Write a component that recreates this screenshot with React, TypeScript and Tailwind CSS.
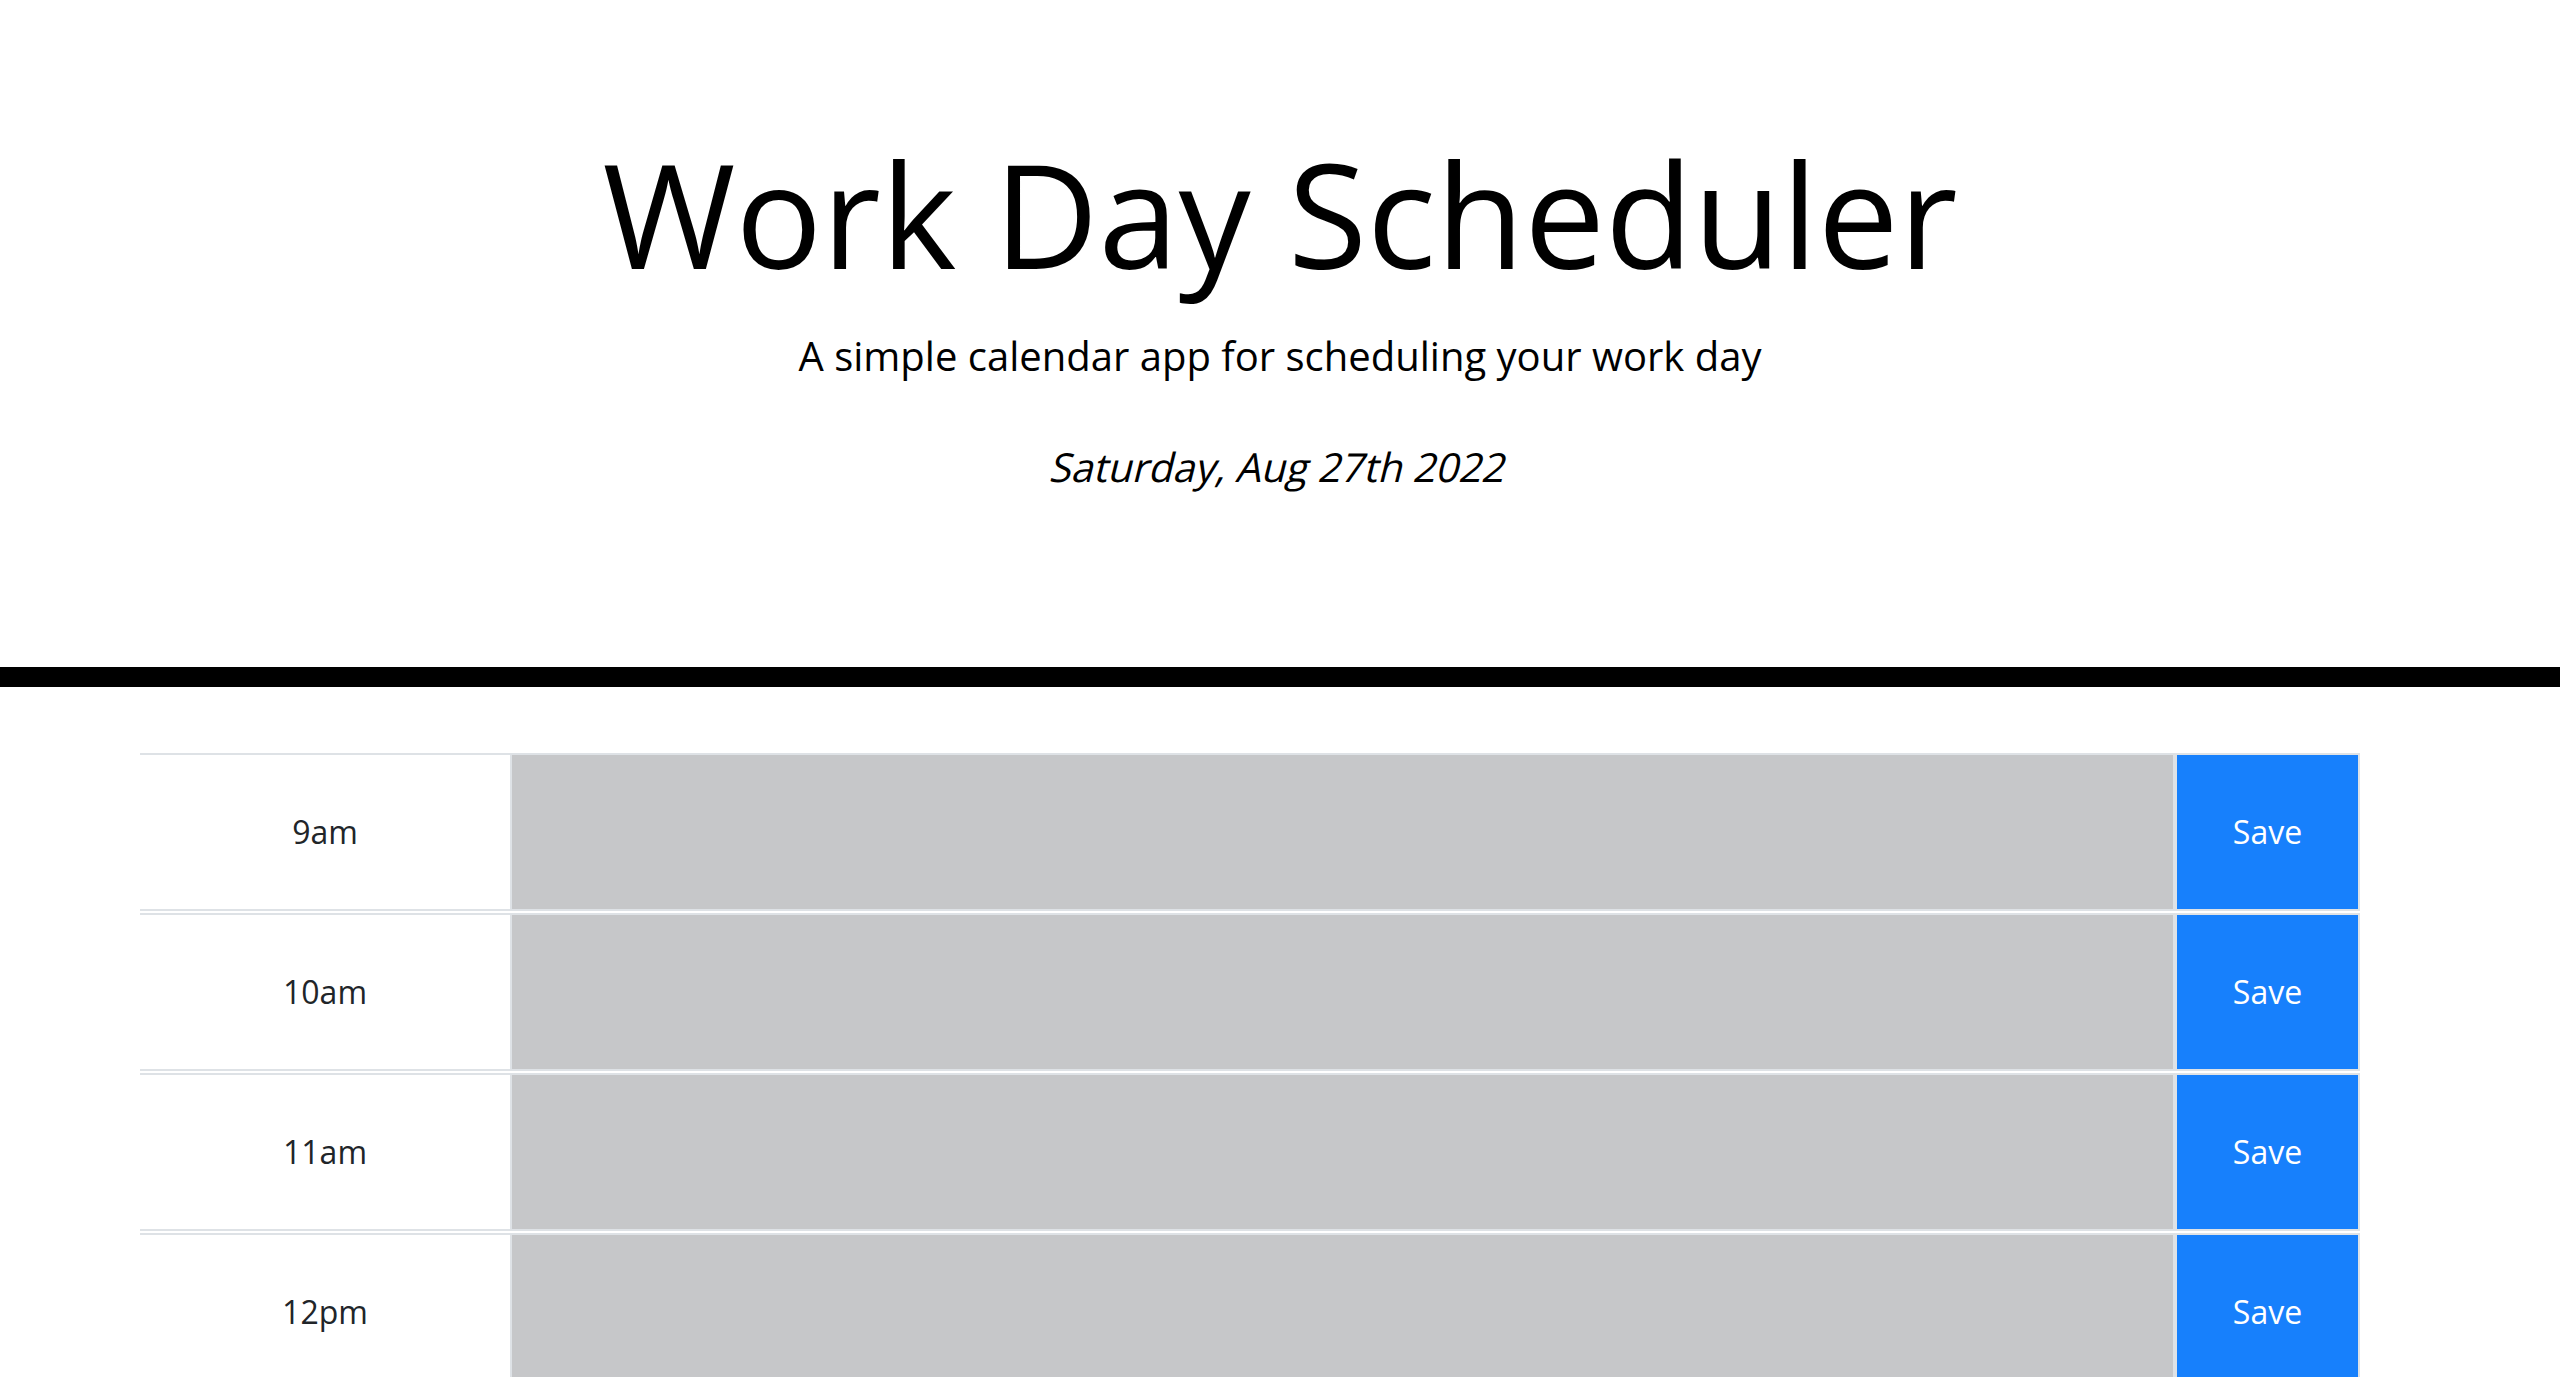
const hours = ['9am', '10am', '11am', '12pm', '1pm', '2pm', '3pm', '4pm', '5pm']

function HourRow({ label }: { label: string }) {
  return (
    <div className="flex h-[158px] border-y-2 border-[#dee2e6] mb-[2px]">
      <div className="w-[370px] flex items-center justify-center text-[32px] text-[#212529]">
        {label}
      </div>
      <textarea
        className="flex-1 resize-none bg-[#c6c7c9] border-x-2 border-[#dee2e6] outline-none"
        aria-label={label}
      />
      <button className="w-[185px] flex items-center justify-center bg-[#1780fc] border-x-2 border-[#dee2e6] text-[32px] text-white">
        Save
      </button>
    </div>
  )
}

export default function App() {
  return (
    <div className="min-h-screen bg-white text-black font-['Open_Sans',sans-serif]">
      {/* Header */}
      <header className="pt-[127px] pb-[170px] text-center border-b-[20px] border-black">
        <h1 className="text-[144px] leading-[172px] font-normal">Work Day Scheduler</h1>
        <p className="mt-[27px] text-[40px] leading-[60px] font-normal">
          A simple calendar app for scheduling your work day
        </p>
        {/* regular face slanted, like the browser's synthetic italic */}
        <p className="mt-[51px] text-[40px] leading-[60px]">
          <span className="inline-block -skew-x-[14deg]">Saturday, Aug 27th 2022</span>
        </p>
      </header>

      {/* Time blocks */}
      <div className="pt-[66px] pl-[140px]">
        <div className="w-[2220px]">
          {hours.map((h) => (
            <HourRow key={h} label={h} />
          ))}
        </div>
      </div>
    </div>
  )
}
